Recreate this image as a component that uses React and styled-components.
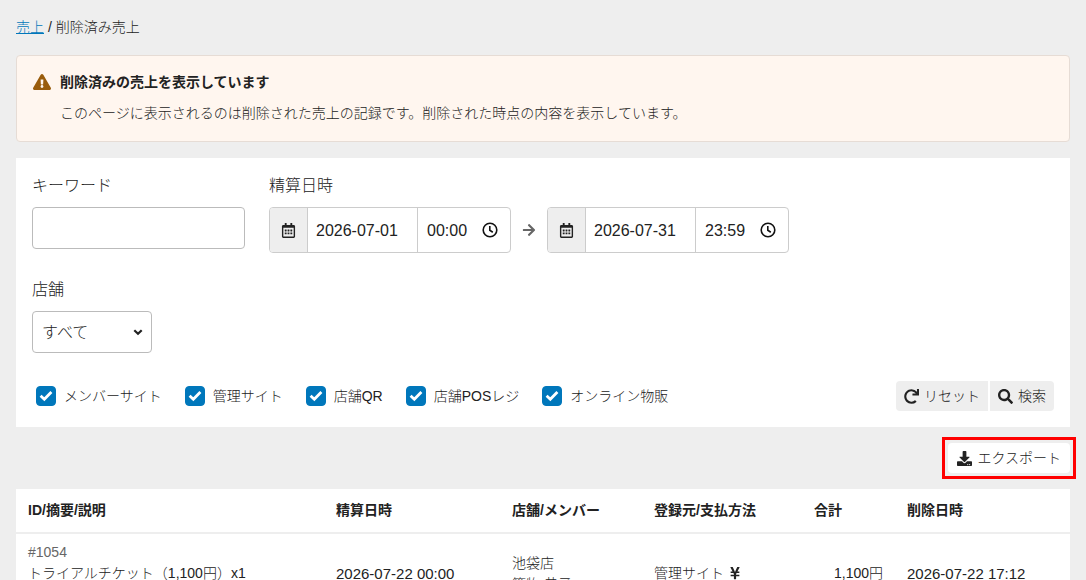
import React from 'react';
import styled, { createGlobalStyle } from 'styled-components';
import {
  FaExclamationTriangle,
  FaRegCalendarAlt,
  FaArrowRight,
  FaRedo,
  FaSearch,
  FaDownload,
  FaYenSign,
} from 'react-icons/fa';

const GlobalStyle = createGlobalStyle`
  *, *::before, *::after { box-sizing: border-box; }
  body {
    margin: 0;
    background: #eeeeee;
    color: #222222;
    font: 300 14px/21px "Liberation Sans", "Noto Sans CJK JP", sans-serif;
  }
  button, input, select { font: inherit; color: inherit; }
`;

const Page = styled.div`
  padding: 16px;
`;

const Breadcrumb = styled.nav`
  padding: 1px 0 17px;
  a { color: #0077bb; text-decoration: underline; }
`;

const Notice = styled.section`
  display: flex;
  gap: 9px;
  padding: 16px;
  margin-bottom: 16px;
  background: #fff6ef;
  border: 1px solid #e6dcd5;
  border-radius: 4px;
  > svg { width: 18px; height: 18px; margin-top: 1px; color: #995c0c; }
`;

const NoticeTitle = styled.h1`
  margin: 0 0 8px;
  font-size: 14px;
  line-height: 21px;
`;

const NoticeText = styled.p`
  margin: 0;
  line-height: 24px;
`;

const Panel = styled.form`
  padding: 16px;
  background: #ffffff;
`;

const Fields = styled.div`
  display: flex;
  flex-wrap: wrap;
  gap: 24px;
  margin-bottom: 25px;
`;

const Field = styled.div`
  display: flex;
  flex-direction: column;
  gap: 9px;
`;

const Label = styled.label`
  font-size: 16px;
  line-height: 24px;
`;

const TextInput = styled.input`
  width: 213px;
  height: 42px;
  padding: 0 8px;
  background: #ffffff;
  border: 1px solid #bbbbbb;
  border-radius: 4px;
`;

const SelectBox = styled.div`
  display: grid;
  width: 120px;
  align-items: center;
  > * { grid-area: 1 / 1; }
  > svg { justify-self: end; margin-right: 9px; pointer-events: none; }
`;

const Select = styled.select`
  appearance: none;
  width: 100%;
  height: 42px;
  padding: 0 9px;
  font-size: 16px;
  background: #ffffff;
  border: 1px solid #bbbbbb;
  border-radius: 4px;
`;

const Range = styled.div`
  display: flex;
  align-items: center;
  gap: 11px;
  > svg { color: #666666; }
`;

const DateGroup = styled.div`
  display: flex;
  height: 46px;
  overflow: hidden;
  background: #ffffff;
  border: 1px solid #cccccc;
  border-radius: 4px;
`;

const Addon = styled.span`
  display: grid;
  place-items: center;
  width: 38px;
  background: #eeeeee;
  border-right: 1px solid #cccccc;
`;

const DateInput = styled.input`
  width: 110px;
  padding: 0 8px;
  font-size: 16px;
  border: 0;
  border-right: 1px solid #cccccc;
`;

const TimeBox = styled.span`
  display: flex;
  align-items: center;
  width: 92px;
  padding: 0 12px 0 9px;
`;

const TimeInput = styled.input`
  flex: 1;
  min-width: 0;
  padding: 0;
  font-size: 16px;
  border: 0;
`;

const FilterBar = styled.div`
  display: flex;
  align-items: center;
  justify-content: space-between;
  margin-top: 28px;
`;

const Checks = styled.div`
  display: flex;
  gap: 23px;
  padding-left: 4px;
`;

const Check = styled.label`
  display: flex;
  align-items: center;
  gap: 8px;
`;

const CheckMark = styled.span`
  display: grid;
  > * { grid-area: 1 / 1; }
  > svg { pointer-events: none; opacity: 0; }
  > input:checked + svg { opacity: 1; }
`;

const CheckInput = styled.input`
  appearance: none;
  width: 20px;
  height: 20px;
  margin: 0;
  border: 1px solid #0077bb;
  border-radius: 4px;
  &:checked { background: #0077bb; }
`;

const ButtonGroup = styled.div`
  display: flex;
  gap: 2px;
  button:first-child { border-radius: 4px 0 0 4px; }
  button:last-child { border-radius: 0 4px 4px 0; }
`;

const Button = styled.button`
  display: flex;
  align-items: center;
  gap: 5px;
  height: 30px;
  padding: 0 ${(p) => (p.$light ? 9 : 8)}px;
  border: 0;
  border-radius: 4px;
  background: ${(p) => (p.$light ? '#ffffff' : '#eeeeee')};
  white-space: nowrap;
`;

const Actions = styled.div`
  display: flex;
  justify-content: flex-end;
  padding: 16px 0;
`;

const Highlight = styled.div`
  position: relative;
  &::after {
    content: '';
    position: absolute;
    inset: -6px;
    border: 3px solid #ff0000;
    pointer-events: none;
  }
`;

const Table = styled.table`
  width: 100%;
  table-layout: fixed;
  border-collapse: collapse;
  background: #ffffff;
`;

const Th = styled.th`
  height: 44px;
  padding: 0 12px;
  text-align: left;
  border-bottom: 2px solid #eeeeee;
`;

const Td = styled.td`
  height: 80px;
  padding: 8px 12px;
  vertical-align: ${(p) => (p.$top ? 'top' : 'middle')};
  text-align: ${(p) => (p.$right ? 'right' : 'left')};
  white-space: nowrap;
  svg { vertical-align: -2px; }
`;

const Muted = styled.div`
  color: #666666;
`;

const DateText = styled.time`
  font-size: 15px;
`;

const Clock = () => (
  <svg width="16" height="16" viewBox="0 0 16 16" fill="none" stroke="#111111" strokeWidth="1.6" aria-hidden="true">
    <circle cx="8" cy="8" r="6.8" />
    <path d="M7.8 4v4.3l3 1.9" />
  </svg>
);

const Chevron = () => (
  <svg width="10" height="10" viewBox="0 0 10 10" fill="none" stroke="#222222" strokeWidth="2.2" aria-hidden="true">
    <path d="M1.3 3.2 5 6.8 8.7 3.2" />
  </svg>
);

const Tick = () => (
  <svg width="20" height="20" viewBox="0 0 20 20" fill="none" stroke="#ffffff" strokeWidth="2.8" aria-hidden="true">
    <path d="M4.6 9.8 8.3 13.3 15.4 6" />
  </svg>
);

const DateTime = ({ id, name, date, time }) => (
  <DateGroup>
    <Addon><FaRegCalendarAlt size={15} /></Addon>
    <DateInput id={id} aria-label={`${name} 日付`} defaultValue={date} />
    <TimeBox>
      <TimeInput aria-label={`${name} 時刻`} defaultValue={time} />
      <Clock />
    </TimeBox>
  </DateGroup>
);

const sources = ['メンバーサイト', '管理サイト', '店舗QR', '店舗POSレジ', 'オンライン物販'];

const columns = [
  ['ID/摘要/説明', 308],
  ['精算日時', 176],
  ['店舗/メンバー', 142],
  ['登録元/支払方法', 160],
  ['合計', 93],
  ['削除日時', 175],
];

export default function App() {
  return (
    <Page>
      <GlobalStyle />
      <Breadcrumb><a href="#sales">売上</a> / 削除済み売上</Breadcrumb>

      <Notice>
        <FaExclamationTriangle />
        <div>
          <NoticeTitle>削除済みの売上を表示しています</NoticeTitle>
          <NoticeText>このページに表示されるのは削除された売上の記録です。削除された時点の内容を表示しています。</NoticeText>
        </div>
      </Notice>

      <Panel onSubmit={(e) => e.preventDefault()}>
        <Fields>
          <Field>
            <Label htmlFor="keyword">キーワード</Label>
            <TextInput id="keyword" type="text" />
          </Field>
          <Field>
            <Label htmlFor="from">精算日時</Label>
            <Range>
              <DateTime id="from" name="開始" date="2026-07-01" time="00:00" />
              <FaArrowRight size={14} />
              <DateTime id="to" name="終了" date="2026-07-31" time="23:59" />
            </Range>
          </Field>
        </Fields>
        <Field>
          <Label htmlFor="store">店舗</Label>
          <SelectBox>
            <Select id="store"><option>すべて</option></Select>
            <Chevron />
          </SelectBox>
        </Field>
        <FilterBar>
          <Checks>
            {sources.map((s) => (
              <Check key={s}>
                <CheckMark>
                  <CheckInput type="checkbox" defaultChecked />
                  <Tick />
                </CheckMark>
                {s}
              </Check>
            ))}
          </Checks>
          <ButtonGroup>
            <Button type="reset"><FaRedo size={15} />リセット</Button>
            <Button type="submit"><FaSearch size={15} />検索</Button>
          </ButtonGroup>
        </FilterBar>
      </Panel>

      <Actions>
        <Highlight>
          <Button type="button" $light><FaDownload size={15} />エクスポート</Button>
        </Highlight>
      </Actions>

      <Table>
        <colgroup>
          {columns.map(([name, width]) => <col key={name} width={width} />)}
        </colgroup>
        <thead>
          <tr>{columns.map(([name]) => <Th key={name} scope="col">{name}</Th>)}</tr>
        </thead>
        <tbody>
          <tr>
            <Td $top>
              <Muted>#1054</Muted>
              トライアルチケット（1,100円）x1
            </Td>
            <Td><DateText>2026-07-22 00:00</DateText></Td>
            <Td>池袋店<br />管物 恭子</Td>
            <Td>管理サイト <FaYenSign size={14} /></Td>
            <Td $right>1,100円</Td>
            <Td><DateText>2026-07-22 17:12</DateText></Td>
          </tr>
        </tbody>
      </Table>
    </Page>
  );
}
